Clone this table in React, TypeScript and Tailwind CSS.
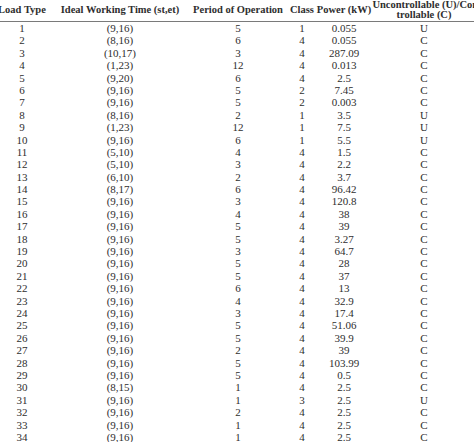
const rows: [number, string, number, number, string, string][] = [
  [1, '(9,16)', 5, 1, '0.055', 'U'],
  [2, '(8,16)', 6, 4, '0.055', 'C'],
  [3, '(10,17)', 3, 4, '287.09', 'C'],
  [4, '(1,23)', 12, 4, '0.013', 'C'],
  [5, '(9,20)', 6, 4, '2.5', 'C'],
  [6, '(9,16)', 5, 2, '7.45', 'C'],
  [7, '(9,16)', 5, 2, '0.003', 'C'],
  [8, '(8,16)', 2, 1, '3.5', 'U'],
  [9, '(1,23)', 12, 1, '7.5', 'U'],
  [10, '(9,16)', 6, 1, '5.5', 'U'],
  [11, '(5,10)', 4, 4, '1.5', 'C'],
  [12, '(5,10)', 3, 4, '2.2', 'C'],
  [13, '(6,10)', 2, 4, '3.7', 'C'],
  [14, '(8,17)', 6, 4, '96.42', 'C'],
  [15, '(9,16)', 3, 4, '120.8', 'C'],
  [16, '(9,16)', 4, 4, '38', 'C'],
  [17, '(9,16)', 5, 4, '39', 'C'],
  [18, '(9,16)', 5, 4, '3.27', 'C'],
  [19, '(9,16)', 3, 4, '64.7', 'C'],
  [20, '(9,16)', 5, 4, '28', 'C'],
  [21, '(9,16)', 5, 4, '37', 'C'],
  [22, '(9,16)', 6, 4, '13', 'C'],
  [23, '(9,16)', 4, 4, '32.9', 'C'],
  [24, '(9,16)', 3, 4, '17.4', 'C'],
  [25, '(9,16)', 5, 4, '51.06', 'C'],
  [26, '(9,16)', 5, 4, '39.9', 'C'],
  [27, '(9,16)', 2, 4, '39', 'C'],
  [28, '(9,16)', 5, 4, '103.99', 'C'],
  [29, '(9,16)', 5, 4, '0.5', 'C'],
  [30, '(8,15)', 1, 4, '2.5', 'C'],
  [31, '(9,16)', 1, 3, '2.5', 'U'],
  [32, '(9,16)', 2, 4, '2.5', 'C'],
  [33, '(9,16)', 1, 4, '2.5', 'C'],
  [34, '(9,16)', 1, 4, '2.5', 'C'],
];

export default function App() {
  return (
    <div className="w-[474px] h-[442px] overflow-hidden bg-white text-[#2e2e2e] font-['Liberation_Serif',serif]">
      <div className="ml-[-8px] w-[484px]">
        {/* header */}
        <div className="flex items-center h-[22px] pb-[1px] border-b border-[#7a7a7a] font-bold text-[10.5px] leading-[10px] whitespace-nowrap">
          <div className="w-[60px] text-center">Load Type</div>
          <div className="w-[136px] text-center">Ideal Working Time (st,et)</div>
          <div className="w-[100px] text-center">Period of Operation</div>
          <div className="w-[28px] text-center">Class</div>
          <div className="w-[56px] text-center">Power (kW)</div>
          <div className="w-[104px] flex flex-col items-center">
            <span className="pl-[6px]">Uncontrollable (U)/Con-</span>
            <span>trollable (C)</span>
          </div>
        </div>

        {/* body */}
        <div className="text-[11px] leading-[12.4px]">
          {rows.map((r) => (
            <div key={r[0]} className="flex h-[12.4px]">
              <div className="w-[60px] text-center">{r[0]}</div>
              <div className="w-[136px] text-center">{r[1]}</div>
              <div className="w-[100px] text-center">{r[2]}</div>
              <div className="w-[28px] text-center">{r[3]}</div>
              <div className="w-[56px] text-center">{r[4]}</div>
              <div className="w-[104px] text-center">{r[5]}</div>
            </div>
          ))}
        </div>
      </div>
    </div>
  );
}
